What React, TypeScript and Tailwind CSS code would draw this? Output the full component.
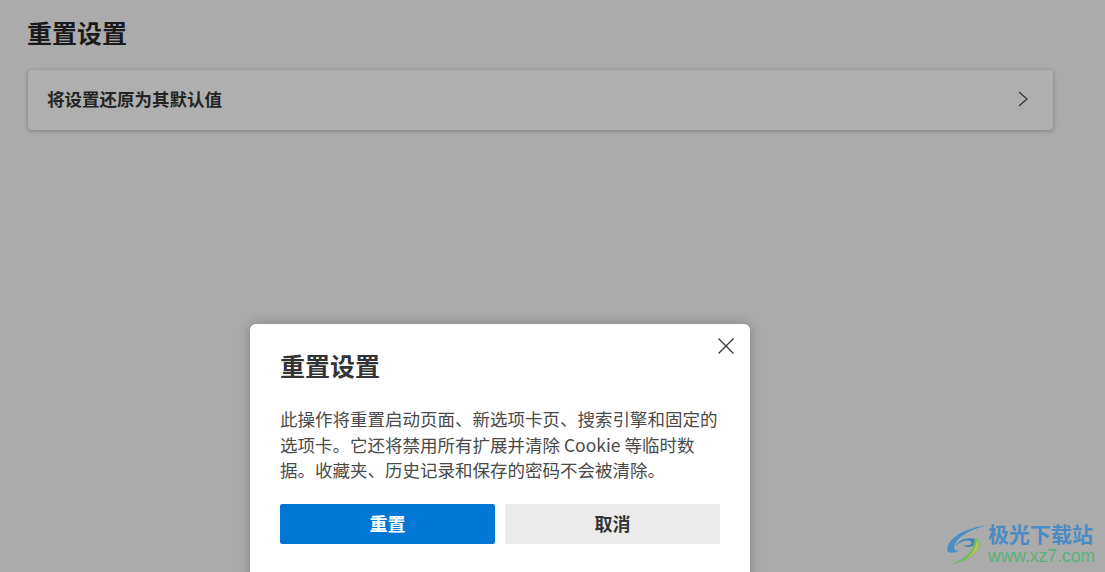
const cjk = 'font-["Noto_Sans_CJK_SC","Noto_Sans",sans-serif]'

function Logo() {
  return (
    <div className="absolute right-[10px] bottom-[6px] flex items-center">
      <svg width="46" height="42" viewBox="0 0 48 46" className="mr-[-3px] mt-[4px]">
        <path d="M1 28C3 15 18 5 46 1 26 6 12 14 9 24c-1 4 2 6 6 5-5 3-14 4-14-1z" fill="#4a90c8" />
        <path d="M10 25c3-7 12-11 19-9 5 1 5 6 0 8-4 2-9 1-10-1 2 1 6 1 8-1 2-2 0-4-4-4-5 0-9 3-13 7z" fill="#3f83ba" />
        <path d="M32 15c6 2 6 8 2 14-5 8-15 13-28 15 9-4 19-9 22-16 2-5 3-9 4-13z" fill="#72b86a" />
        <path d="M34 17c3 4 2 10-3 15-3 3-7 6-11 8 7-5 12-12 14-23z" fill="#b4c84e" />
      </svg>
      <div className={`flex flex-col ${cjk}`}>
        <span className="text-[#4b8bc4] text-[21px] leading-[25px] font-bold">极光下载站</span>
        <span className="text-[#58b27a] text-[17.5px] leading-[20px] font-['Liberation_Sans',sans-serif]">www.xz7.com</span>
      </div>
    </div>
  )
}

export default function App() {
  return (
    <div className={`relative w-[1105px] h-[572px] overflow-hidden bg-[#ababab] ${cjk}`}>
      {/* Settings page */}
      <div className="w-[1025px] ml-[28px] pt-[16px]">
        <h1 className="text-[25px] leading-[32px] font-bold text-[#1a1a1a] ml-[-1px]">重置设置</h1>
        <div className="flex items-center justify-between h-[60px] mt-[22px] pl-[19px] pr-[22px] rounded-[4px] bg-[#afafaf] shadow-[0_1px_4px_rgba(0,0,0,0.28)]">
          <span className="text-[17.5px] leading-[26px] font-bold text-[#242424] mb-[2px]">将设置还原为其默认值</span>
          <svg width="16" height="16" viewBox="0 0 16 16" fill="none" stroke="#2e2e2e" strokeWidth="1.2" className="mb-[2px]">
            <path d="M4 1l8 7-8 7" />
          </svg>
        </div>
      </div>

      {/* Dialog */}
      <div className="absolute inset-0 pl-[250px] pt-[324px]">
        <div className="relative w-[500px] h-[260px] px-[30px] pt-[23px] rounded-[6px] bg-white shadow-[0_0_12px_rgba(0,0,0,0.25)]">
          <button className="absolute top-[14px] right-[16px]">
            <svg width="16" height="16" viewBox="0 0 16 16" fill="none" stroke="#333" strokeWidth="1.2">
              <path d="M0.5 0.5l15 15M15.5 0.5l-15 15" />
            </svg>
          </button>
          <h2 className="text-[25px] leading-[36px] font-bold text-[#333]">重置设置</h2>
          <p className="mt-[23px] text-[17.5px] leading-[25.5px] text-[#4a4a4a] w-[440px]">
            此操作将重置启动页面、新选项卡页、搜索引擎和固定的选项卡。它还将禁用所有扩展并清除 Cookie 等临时数据。收藏夹、历史记录和保存的密码不会被清除。
          </p>
          <div className="flex gap-[10px] mt-[21px]">
            <button className="w-[215px] h-[40px] rounded-[2px] bg-[#0078d4] text-white text-[18px] font-bold">重置</button>
            <button className="w-[215px] h-[40px] rounded-[2px] bg-[#ebebeb] text-[#333] text-[18px] font-bold">取消</button>
          </div>
        </div>
      </div>

      <Logo />
    </div>
  )
}
